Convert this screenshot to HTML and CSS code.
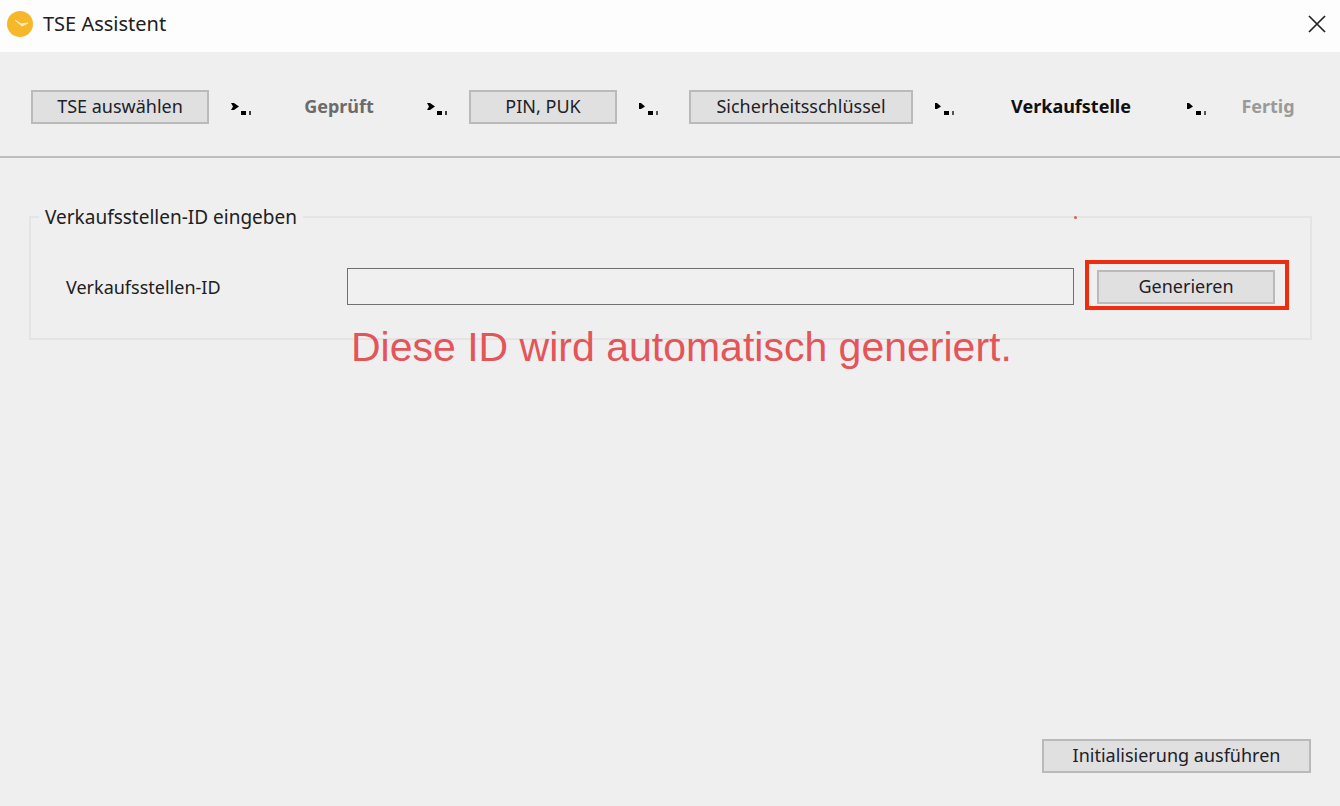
FILE: index.html
```html
<!DOCTYPE html>
<html lang="de">
<head>
<meta charset="utf-8">
<title>TSE Assistent</title>
<meta name="viewport" content="width=device-width, initial-scale=1">
<link rel="stylesheet" href="styles.css">
</head>
<body>
<svg class="defs" aria-hidden="true">
  <symbol id="arrow" viewBox="0 0 20 14">
    <path d="M0 1h3l5 3.500-5 3.500H0l2-3.500z"/>
    <path d="M10 9h5v4h-5z"/>
    <path d="M18 9h2v4h-2z" opacity=".75"/>
  </symbol>
  <symbol id="arrow-small" viewBox="0 0 20 14">
    <path d="M0 1h2l4 3.500-4 2.500H0z"/>
    <path d="M9 9h5v4H9z"/>
    <path d="M17 9h2v4h-2z" opacity=".65"/>
  </symbol>
</svg>
<header class="titlebar">
  <svg class="logo" viewBox="0 0 26 26" aria-hidden="true">
    <circle cx="13" cy="13" r="13" fill="#f6b72a"/>
    <path d="M8 9l6 4 7-1-6 3z" fill="#fff0c4" stroke="#fff0c4" stroke-width="1"/>
  </svg>
  <h1 class="title">TSE Assistent</h1>
  <button class="close" type="button" aria-label="Schließen">
    <svg class="close-icon" viewBox="0 0 18 18" aria-hidden="true"><path d="M1 1l16 16M17 1L1 17" fill="none" stroke="#222" stroke-width="1.700"/></svg>
  </button>
</header>
<nav class="steps">
  <button class="button" type="button">TSE auswählen</button>
  <svg class="arrow"><use href="#arrow"/></svg>
  <span class="step done">Geprüft</span>
  <svg class="arrow"><use href="#arrow"/></svg>
  <button class="button" type="button">PIN, PUK</button>
  <svg class="arrow"><use href="#arrow-small"/></svg>
  <button class="button" type="button">Sicherheitsschlüssel</button>
  <svg class="arrow"><use href="#arrow-small"/></svg>
  <span class="step current" aria-current="step">Verkaufstelle</span>
  <svg class="arrow"><use href="#arrow-small"/></svg>
  <span class="step pending">Fertig</span>
</nav>
<main class="content">
  <fieldset class="group">
    <legend class="legend">Verkaufsstellen-ID eingeben</legend>
    <div class="row">
      <label class="label" for="store-id">Verkaufsstellen-ID</label>
      <input class="field" id="store-id" type="text" readonly>
      <div class="highlight"><button class="button generate" type="button">Generieren</button></div>
    </div>
    <span class="dot"></span>
    <p class="note">Diese ID wird automatisch generiert.</p>
  </fieldset>
</main>
<footer class="footer">
  <button class="button run" type="button">Initialisierung ausführen</button>
</footer>
</body>
</html>
```
FILE: styles.css
```css
* {
  box-sizing: border-box;
}

body {
  margin: 0;
  min-height: 100vh;
  display: flex;
  flex-direction: column;
  background: #efefef;
  color: #202020;
  font: 18px/24px "Noto Sans", sans-serif;
}

.defs {
  position: absolute;
  width: 0;
  height: 0;
}

.titlebar {
  display: flex;
  align-items: center;
  height: 52px;
  padding: 0 12px 4px 7px;
  background: #fdfdfd;
}

.logo {
  width: 26px;
  height: 26px;
  margin-right: 10px;
}

.title {
  flex: 1;
  margin: 0;
  font: 20px/28px "Noto Sans", sans-serif;
}

.close {
  display: flex;
  padding: 2px;
  border: 0;
  background: none;
}

.close-icon {
  width: 18px;
  height: 18px;
}

.steps {
  display: grid;
  grid-template-columns: 178fr 64fr 132fr 64fr 148fr 72fr 224fr 64fr 188fr 62fr 82fr;
  align-items: center;
  padding: 38px 31px 32px 31px;
  border-bottom: 2px solid #bdbdbd;
}

.button {
  height: 34px;
  padding: 0 0 2px;
  border: 2px solid #bababa;
  background: #e0e0e0;
  color: #202028;
  font: inherit;
  line-height: 24px;
  white-space: nowrap;
}

.arrow {
  width: 20px;
  height: 14px;
  margin: 4px 0 0 22px;
}

.step {
  padding-bottom: 2px;
  font-weight: 700;
  text-align: center;
}

.done {
  color: #6b6b6b;
}

.current {
  color: #101010;
}

.pending {
  color: #9a9a9a;
}

.content {
  flex: 1;
  padding: 46px 28px 0 29px;
}

.group {
  position: relative;
  min-width: 0;
  margin: 0;
  padding: 30px 21px 28px 35px;
  border: 2px solid #e4e4e4;
}

.legend {
  margin-left: -27px;
  padding: 0 6px;
  font-size: 19px;
  line-height: 26px;
}

.row {
  display: flex;
  align-items: center;
}

.label,
.field {
  margin-top: 3px;
}

.label {
  width: 281px;
}

.field {
  flex: 1;
  min-width: 0;
  height: 37px;
  margin-right: 11px;
  padding: 0 8px;
  border: 1px solid #707070;
  background: #f0f0f0;
  font: inherit;
}

.highlight {
  display: flex;
  padding: 6px 10px 2px 8px;
  border: 4px solid #ee2d10;
}

.generate {
  width: 178px;
}

.dot {
  position: absolute;
  top: -14px;
  right: 233px;
  width: 3px;
  height: 3px;
  border-radius: 50%;
  background: #dc5b55;
}

.note {
  position: absolute;
  top: 93px;
  left: 320px;
  margin: 0;
  color: #e4555a;
  font: 41px/48px "Liberation Sans", sans-serif;
  white-space: nowrap;
}

.footer {
  display: flex;
  justify-content: flex-end;
  padding: 0 29px 33px;
}

.run {
  width: 269px;
}
```
